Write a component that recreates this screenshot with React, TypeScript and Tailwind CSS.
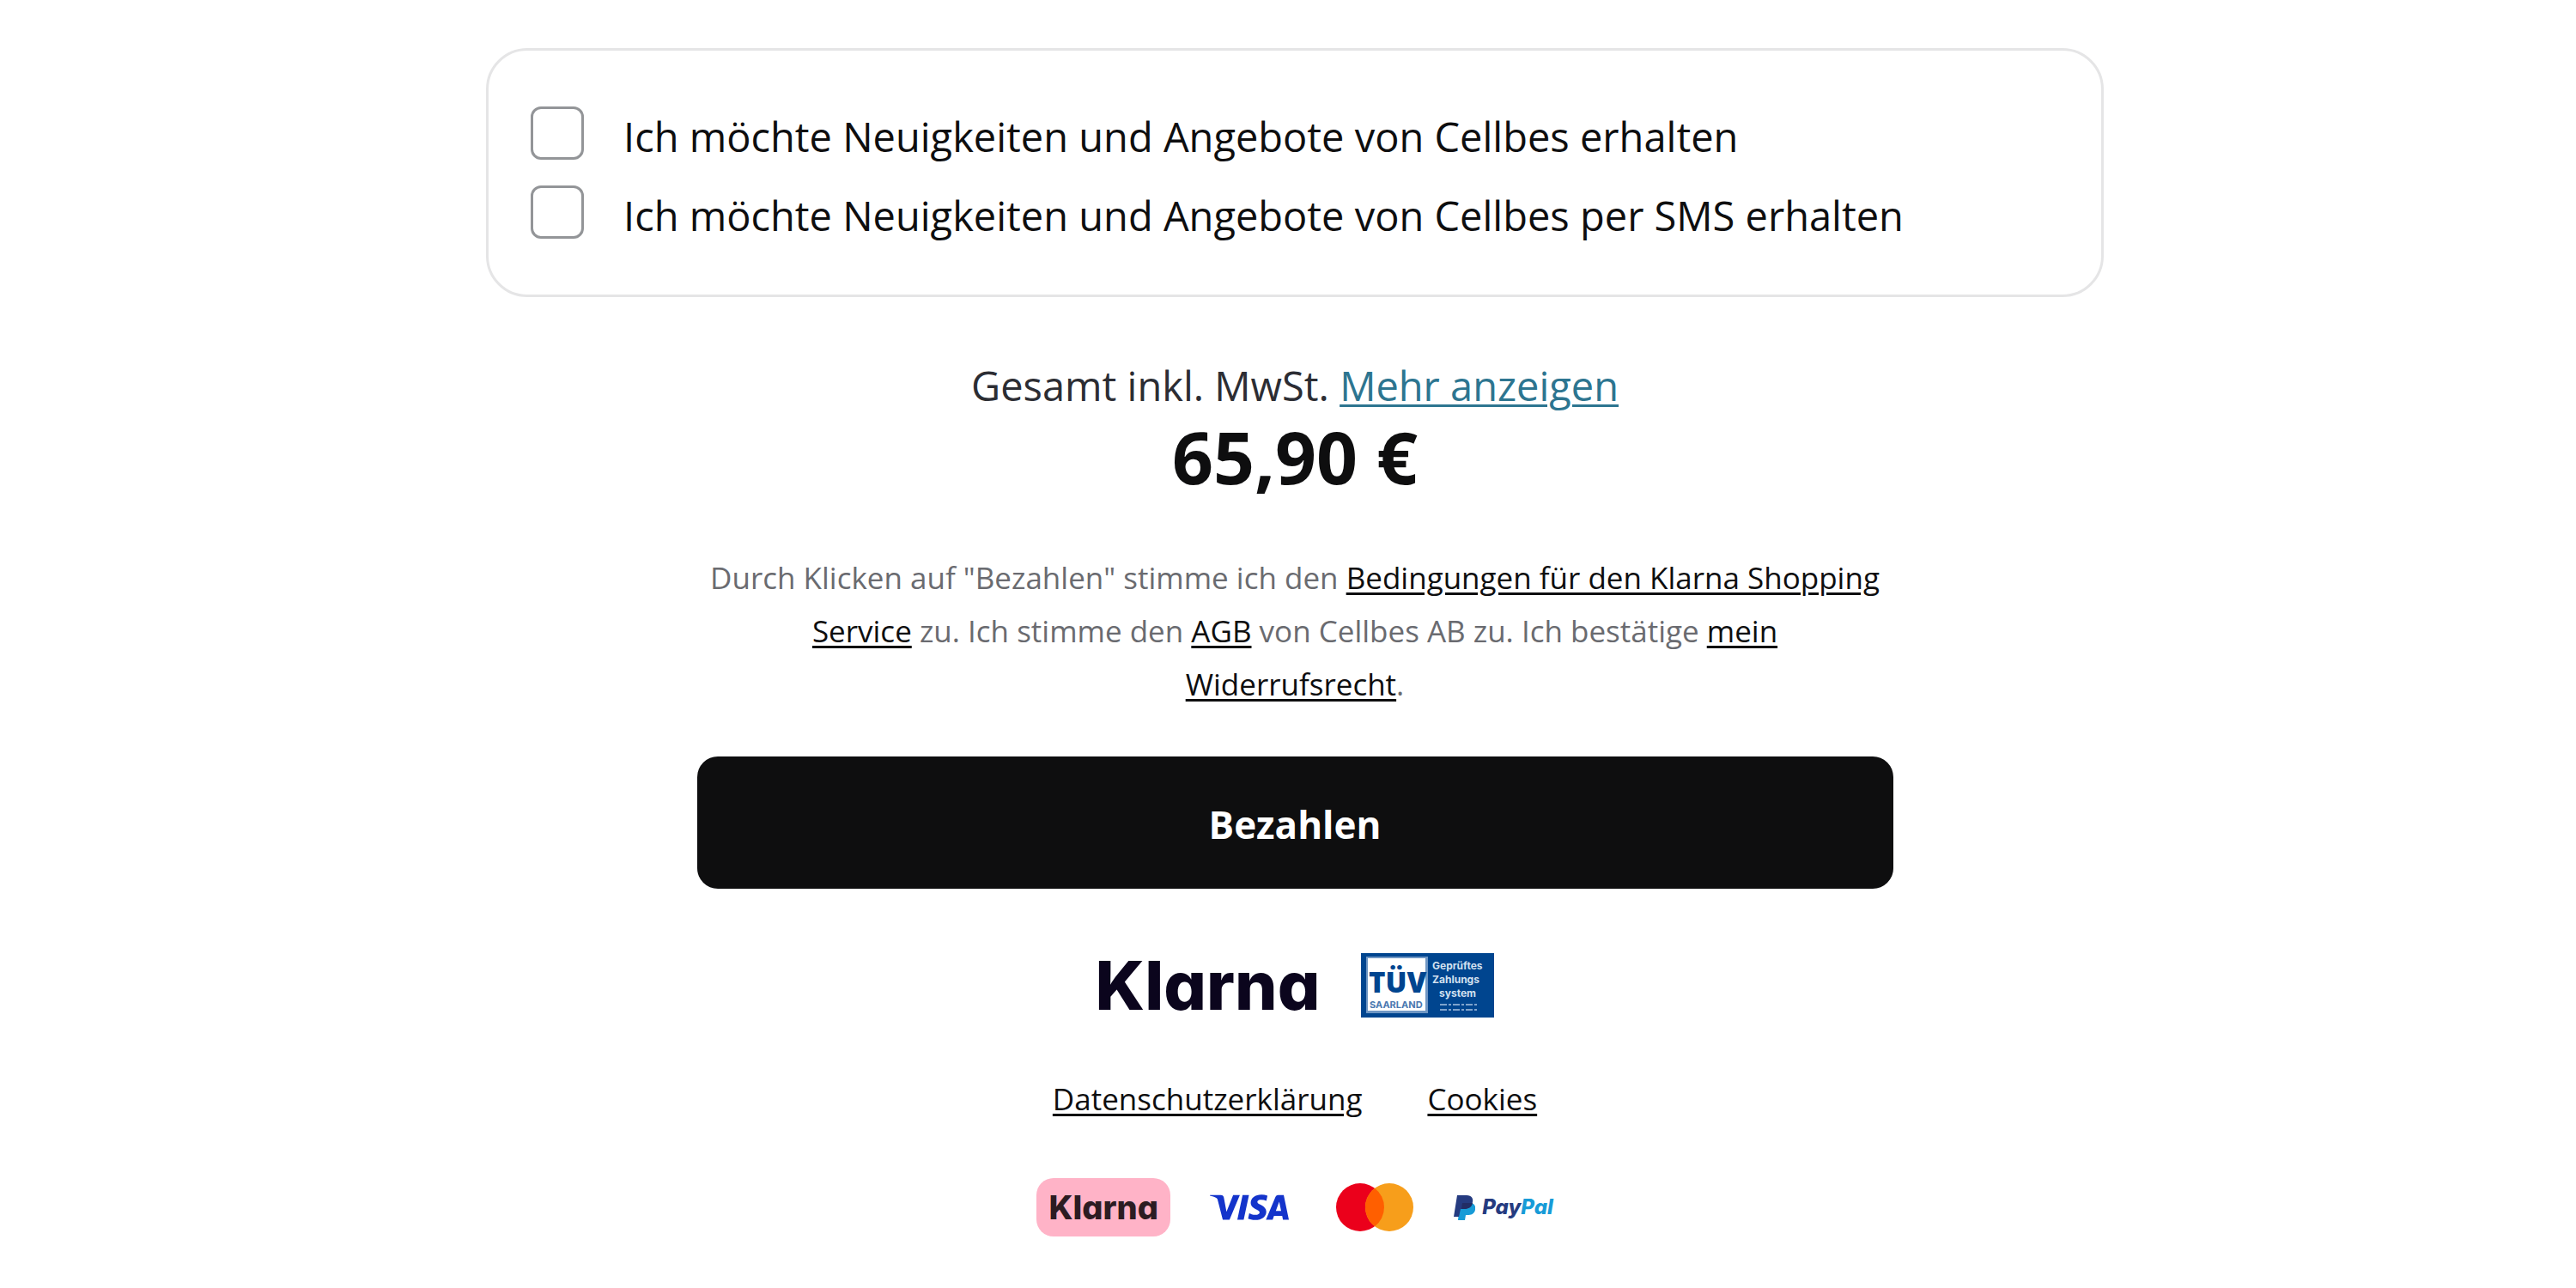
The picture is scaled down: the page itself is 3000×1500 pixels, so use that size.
import { type FC, type ReactNode } from 'react';
import { clsx } from 'clsx';
import { SiVisa } from 'react-icons/si';

const CONSENTS = [
  {
    id: 'newsletter',
    label: 'Ich möchte Neuigkeiten und Angebote von Cellbes erhalten',
  },
  {
    id: 'sms',
    label: 'Ich möchte Neuigkeiten und Angebote von Cellbes per SMS erhalten',
  },
];

const TextLink: FC<{ className?: string; children: ReactNode }> = ({
  className,
  children,
}) => (
  <a
    href="#"
    className={clsx(
      'underline decoration-3 underline-offset-4',
      className ?? 'text-[#0e0e0f]',
    )}
  >
    {children}
  </a>
);

const Consent: FC<{ id: string; label: string }> = ({ id, label }) => (
  <div className="flex items-start gap-[46px]">
    <input
      id={id}
      type="checkbox"
      className="size-[62px] shrink-0 appearance-none rounded-xl border-3 border-[#939598] bg-white checked:bg-[#0e0e0f]"
    />
    <label htmlFor={id} className="pt-1 text-[47px] leading-[62px]">
      {label}
    </label>
  </div>
);

const KlarnaWordmark: FC<{ className?: string }> = ({ className }) => (
  <span
    className={clsx(
      "font-['Inter',sans-serif] font-extrabold [font-feature-settings:'cv11']",
      className,
    )}
  >
    Klarna
  </span>
);

const TuvSeal: FC = () => (
  <svg
    viewBox="0 0 155 75"
    className="h-[75px] w-[155px]"
    role="img"
    aria-label="TÜV Saarland Geprüftes Zahlungssystem"
    fontFamily="Inter, sans-serif"
    fontWeight="700"
  >
    <rect width="155" height="75" fill="#00458f" />
    <rect x="6" y="4" width="72" height="66" fill="#6f97c4" />
    <rect x="8" y="6" width="67" height="61" fill="#fff" />
    <text
      x="9"
      y="46"
      fontSize="33"
      fontWeight="800"
      fill="#00458f"
      fontFamily="Open Sans, sans-serif"
    >
      TÜV
    </text>
    <text x="10" y="64" fontSize="11" fill="#4a78b0">
      SAARLAND
    </text>
    <g fill="#d3e1f0" fontSize="12">
      <text x="83" y="19">
        Geprüftes
      </text>
      <text x="83" y="35">
        Zahlungs
      </text>
      <text x="91" y="51">
        system
      </text>
    </g>
    <path
      d="M92 60h45M92 66h45"
      stroke="#7fa3cc"
      strokeWidth="2"
      strokeDasharray="8 2 3 2"
    />
  </svg>
);

const Mastercard: FC = () => (
  <svg
    viewBox="0 0 92 58"
    className="ml-2 h-[58px] w-[92px]"
    role="img"
    aria-label="Mastercard"
  >
    <circle cx="29" cy="29" r="28" fill="#eb001b" />
    <circle cx="63" cy="29" r="28" fill="#f79e1b" />
    <path
      d="M46 6.750a28 28 0 0 1 0 44.500a28 28 0 0 1 0-44.500Z"
      fill="#ff5f00"
    />
  </svg>
);

const PayPal: FC = () => (
  <span className="flex items-center gap-2">
    <svg viewBox="0 0 25 29" className="h-[29px] w-[25px]" aria-hidden="true">
      <path d="M7 9h14c3 1 5 4 4 8-1 5-5 6-9 6h-2l-1 6H5Z" fill="#179bd7" />
      <path d="M4 0h11c6 0 8 4 7 8-1 5-5 8-10 8H8L6 25H0Z" fill="#253b80" />
      <path d="M10 9h12c-1 5-5 7-10 7H9Z" fill="#222d65" />
    </svg>
    <span className="font-['Inter',sans-serif] text-[24px] leading-8 font-extrabold italic">
      <span className="text-[#253b80]">Pay</span>
      <span className="text-[#179bd7]">Pal</span>
    </span>
  </span>
);

export default function App() {
  return (
    <main className="flex flex-col items-center bg-white pt-14 pl-4 font-['Open_Sans','Noto_Sans',sans-serif] text-[#0e0e0f]">
      <section className="flex w-full max-w-[1884px] flex-col gap-[26px] rounded-[48px] border-3 border-[#e5e5e6] px-[49px] pt-[65px] pb-[61px]">
        {CONSENTS.map(consent => (
          <Consent key={consent.id} {...consent} />
        ))}
      </section>

      <p className="mt-[70px] text-[47px] leading-[66px] text-[#2c2d33]">
        Gesamt inkl. MwSt.{' '}
        <TextLink className="text-[#2d7590]">Mehr anzeigen</TextLink>
      </p>
      <p className="text-[84px] leading-[100px] font-bold">65,90 €</p>

      <p className="mt-[60px] max-w-[1384px] text-center text-[35px] leading-[62px] text-[#6a6b70]">
        Durch Klicken auf &quot;Bezahlen&quot; stimme ich den{' '}
        <TextLink>Bedingungen für den Klarna Shopping Service</TextLink> zu. Ich
        stimme den <TextLink>AGB</TextLink> von Cellbes AB zu. Ich bestätige{' '}
        <TextLink>mein Widerrufsrecht</TextLink>.
      </p>

      <button
        type="button"
        className="mt-[53px] h-[154px] w-full max-w-[1393px] rounded-3xl bg-[#0e0e0f] pt-1 text-[44px] font-bold text-white"
      >
        Bezahlen
      </button>

      <div className="mt-[75px] flex items-center gap-12">
        <KlarnaWordmark className="text-[78px] leading-[75px] text-[#0b051d]" />
        <TuvSeal />
      </div>

      <nav className="mt-[64px] flex gap-[76px] text-[35px] leading-[61px]">
        <TextLink>Datenschutzerklärung</TextLink>
        <TextLink>Cookies</TextLink>
      </nav>

      <div className="mt-[62px] flex items-center gap-[46px]">
        <div className="flex h-[68px] w-[156px] items-center justify-center rounded-[20px] bg-[#ffb3c7]">
          <KlarnaWordmark className="text-[38px] text-[#2c1c22]" />
        </div>
        <SiVisa className="-my-3 size-[92px] text-[#1434cb]" title="Visa" />
        <Mastercard />
        <PayPal />
      </div>
    </main>
  );
}
